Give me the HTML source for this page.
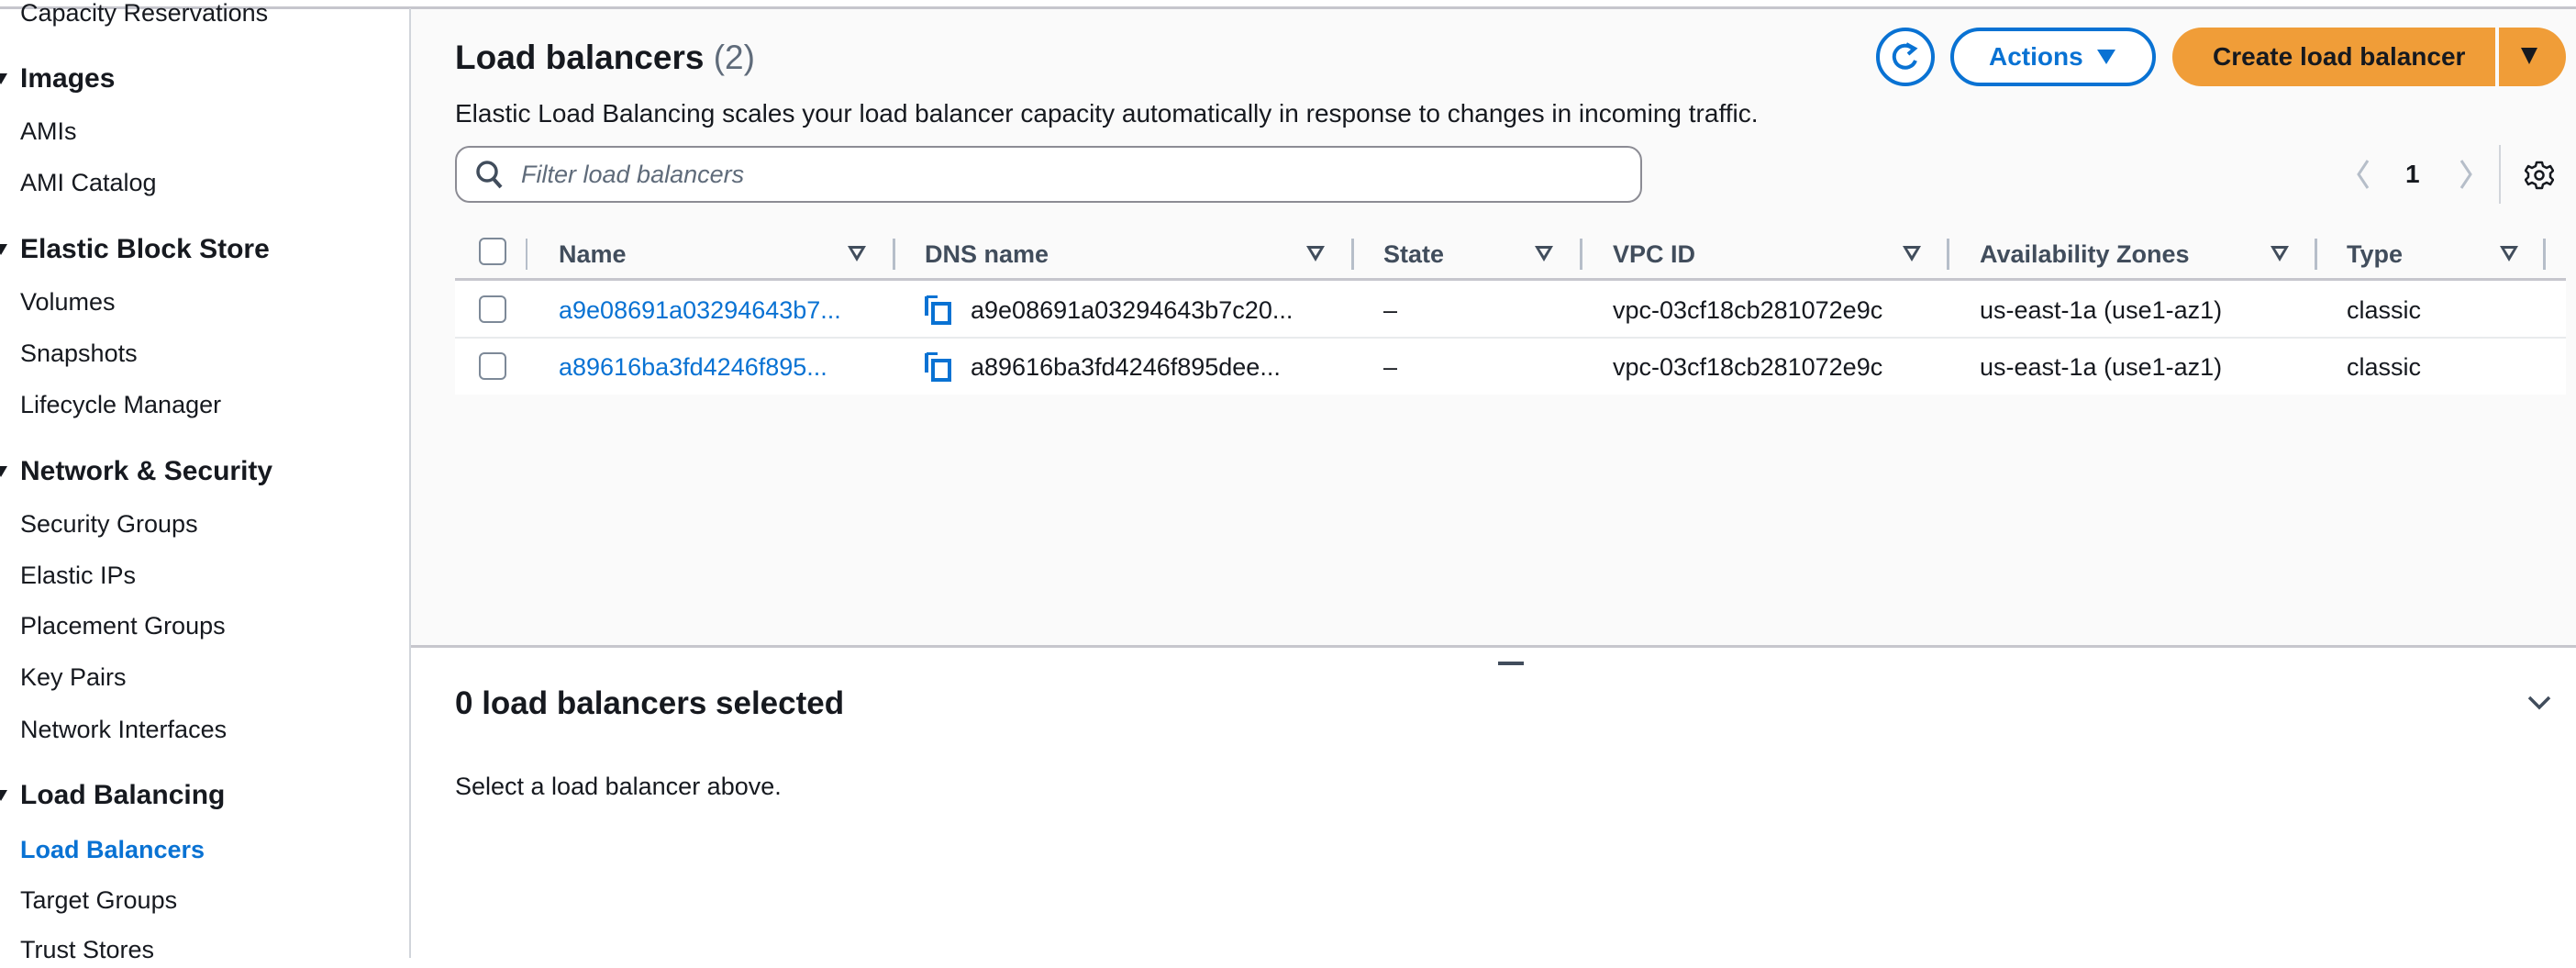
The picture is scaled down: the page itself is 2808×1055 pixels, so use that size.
<!DOCTYPE html>
<html><head><meta charset="utf-8"><style>
*{margin:0;padding:0;box-sizing:border-box}
body{width:2808px;height:1044px;overflow:hidden;background:#fff;font-family:"Liberation Sans",sans-serif;color:#16191f;position:relative}
.a{position:absolute;white-space:nowrap}
.t{font-size:27px;line-height:40px}
.sb{position:absolute;left:22px;font-size:27px;line-height:40px;color:#16191f}
.sh{position:absolute;left:22px;font-size:30px;font-weight:bold;line-height:40px}
.car{position:absolute;left:-6px;width:0;height:0;border-left:7px solid transparent;border-right:7px solid transparent;border-top:12px solid #16191f}
.hd{font-size:27px;font-weight:bold;color:#414d5c;line-height:40px}
.div{position:absolute;width:3px;height:34px;background:#b6bec9;top:260px}
.sort{position:absolute;top:268px;width:0;height:0;border-left:10px solid transparent;border-right:10px solid transparent;border-top:17px solid #414d5c}
.sort:after{content:"";position:absolute;left:-5px;top:-14px;border-left:5px solid transparent;border-right:5px solid transparent;border-top:8px solid #fafafa}
.cb{position:absolute;width:30px;height:30px;border:2px solid #7d8998;border-radius:6px;background:#fff}
.lnk{color:#0972d3}
</style></head><body>
<div class="a" style="left:0;top:0;width:2808px;height:8px;background:#fff"></div>
<div class="a" style="left:0;top:7px;width:2808px;height:3px;background:#c6c6cd"></div>
<div class="a" style="left:446px;top:9px;width:2px;height:1035px;background:#d1d5db"></div>
<div class="sb" style="top:-6px">Capacity Reservations</div>
<div class="car" style="top:80px"></div><div class="sh" style="top:66px">Images</div>
<div class="sb" style="top:123px">AMIs</div>
<div class="sb" style="top:179px">AMI Catalog</div>
<div class="car" style="top:266px"></div><div class="sh" style="top:252px">Elastic Block Store</div>
<div class="sb" style="top:309px">Volumes</div>
<div class="sb" style="top:365px">Snapshots</div>
<div class="sb" style="top:421px">Lifecycle Manager</div>
<div class="car" style="top:508px"></div><div class="sh" style="top:494px">Network &amp; Security</div>
<div class="sb" style="top:551px">Security Groups</div>
<div class="sb" style="top:607px">Elastic IPs</div>
<div class="sb" style="top:662px">Placement Groups</div>
<div class="sb" style="top:718px">Key Pairs</div>
<div class="sb" style="top:775px">Network Interfaces</div>
<div class="car" style="top:861px"></div><div class="sh" style="top:847px">Load Balancing</div>
<div class="sb" style="top:906px;color:#0972d3;font-weight:bold">Load Balancers</div>
<div class="sb" style="top:961px">Target Groups</div>
<div class="sb" style="top:1015px">Trust Stores</div>
<div class="a" style="left:448px;top:10px;width:2360px;height:694px;background:#fafafa"></div>
<div class="a" style="left:448px;top:703px;width:2360px;height:3px;background:#c6c6cd"></div>
<div class="a" style="left:496px;top:39px;font-size:37px;font-weight:bold;line-height:48px">Load balancers <span style="font-weight:normal;color:#5f6b7a">(2)</span></div>
<div class="a t" style="left:496px;top:104px;font-size:28px">Elastic Load Balancing scales your load balancer capacity automatically in response to changes in incoming traffic.</div>
<div class="a" style="left:2045px;top:30px;width:64px;height:64px;border:4px solid #0972d3;border-radius:50%;background:#fff"></div>
<svg class="a" style="left:2057px;top:42px" width="40" height="40" viewBox="0 0 40 40"><path d="M28 11 A12 12 0 1 0 31 24" fill="none" stroke="#0972d3" stroke-width="4"/><path d="M21 6 L30 11 L23 17" fill="none" stroke="#0972d3" stroke-width="4"/></svg>
<div class="a" style="left:2126px;top:30px;width:224px;height:64px;border:4px solid #0972d3;border-radius:32px;background:#fff"></div>
<div class="a" style="left:2168px;top:42px;font-size:28px;font-weight:bold;color:#0972d3;line-height:40px">Actions</div>
<div class="a" style="left:2286px;top:54px;border-left:10px solid transparent;border-right:10px solid transparent;border-top:16px solid #0972d3"></div>
<div class="a" style="left:2368px;top:30px;width:429px;height:64px;border-radius:32px;background:#f09d38"></div>
<div class="a" style="left:2720px;top:30px;width:4px;height:64px;background:#fafafa"></div>
<div class="a" style="left:2412px;top:42px;font-size:28px;font-weight:bold;color:#16191f;line-height:40px">Create load balancer</div>
<div class="a" style="left:2748px;top:52px;border-left:9px solid transparent;border-right:9px solid transparent;border-top:18px solid #16191f"></div>
<div class="a" style="left:496px;top:159px;width:1294px;height:62px;border:2px solid #8c8c94;border-radius:16px;background:#fff"></div>
<svg class="a" style="left:518px;top:174px" width="32" height="34" viewBox="0 0 32 34"><circle cx="13" cy="13" r="10" fill="none" stroke="#414d5c" stroke-width="3.5"/><path d="M20 21 L28 30" stroke="#414d5c" stroke-width="4"/></svg>
<div class="a t" style="left:568px;top:170px;font-style:italic;color:#5f6b7a">Filter load balancers</div>
<svg class="a" style="left:2566px;top:172px" width="20" height="36"><path d="M15 3 L5 18 L15 33" fill="none" stroke="#b6bec9" stroke-width="3"/></svg>
<div class="a" style="left:2622px;top:170px;font-size:28px;font-weight:bold;line-height:40px">1</div>
<svg class="a" style="left:2678px;top:172px" width="20" height="36"><path d="M5 3 L15 18 L5 33" fill="none" stroke="#b6bec9" stroke-width="3"/></svg>
<div class="a" style="left:2724px;top:158px;width:2px;height:64px;background:#d1d5db"></div>
<svg class="a" style="left:2752px;top:174px" width="32" height="34" viewBox="0 0 32 34"><path d="M13 3 h6 l1 4 l4 2 l4-2 l3 5 l-3 3 v4 l3 3 l-3 5 l-4-2 l-4 2 l-1 4 h-6 l-1-4 l-4-2 l-4 2 l-3-5 l3-3 v-4 l-3-3 l3-5 l4 2 l4-2 z" fill="none" stroke="#16191f" stroke-width="2.5" stroke-linejoin="round"/><circle cx="16" cy="17" r="4.5" fill="none" stroke="#16191f" stroke-width="2.5"/></svg>
<div class="a" style="left:496px;top:304px;width:2301px;height:126px;background:#fff"></div>
<div class="a" style="left:496px;top:303px;width:2301px;height:3px;background:#c6c6cd"></div>
<div class="a" style="left:496px;top:367px;width:2301px;height:2px;background:#e9ebed"></div>
<div class="cb" style="left:522px;top:259px"></div>
<div class="div" style="left:573px;width:2px"></div>
<div class="a hd" style="left:609px;top:257px">Name</div><div class="sort" style="left:924px"></div><div class="div" style="left:973px"></div>
<div class="a hd" style="left:1008px;top:257px">DNS name</div><div class="sort" style="left:1424px"></div><div class="div" style="left:1473px"></div>
<div class="a hd" style="left:1508px;top:257px">State</div><div class="sort" style="left:1673px"></div><div class="div" style="left:1722px"></div>
<div class="a hd" style="left:1758px;top:257px">VPC ID</div><div class="sort" style="left:2074px"></div><div class="div" style="left:2122px"></div>
<div class="a hd" style="left:2158px;top:257px">Availability Zones</div><div class="sort" style="left:2475px"></div><div class="div" style="left:2523px"></div>
<div class="a hd" style="left:2558px;top:257px">Type</div><div class="sort" style="left:2725px"></div><div class="div" style="left:2772px"></div>
<div class="cb" style="left:522px;top:322px"></div>
<div class="cb" style="left:522px;top:384px"></div>
<div class="a t lnk" style="left:609px;top:318px">a9e08691a03294643b7...</div>
<div class="a t lnk" style="left:609px;top:380px">a89616ba3fd4246f895...</div>
<svg class="a" style="left:1008px;top:322px" width="30" height="34"><path d="M2 1 H14 M2 1 V22" stroke="#0972d3" stroke-width="4" fill="none"/><rect x="9" y="9" width="18" height="21" fill="none" stroke="#0972d3" stroke-width="4"/></svg>
<svg class="a" style="left:1008px;top:384px" width="30" height="34"><path d="M2 1 H14 M2 1 V22" stroke="#0972d3" stroke-width="4" fill="none"/><rect x="9" y="9" width="18" height="21" fill="none" stroke="#0972d3" stroke-width="4"/></svg>
<div class="a t" style="left:1058px;top:318px">a9e08691a03294643b7c20...</div>
<div class="a t" style="left:1058px;top:380px">a89616ba3fd4246f895dee...</div>
<div class="a t" style="left:1508px;top:318px">–</div>
<div class="a t" style="left:1508px;top:380px">–</div>
<div class="a t" style="left:1758px;top:318px">vpc-03cf18cb281072e9c</div>
<div class="a t" style="left:1758px;top:380px">vpc-03cf18cb281072e9c</div>
<div class="a t" style="left:2158px;top:318px">us-east-1a (use1-az1)</div>
<div class="a t" style="left:2158px;top:380px">us-east-1a (use1-az1)</div>
<div class="a t" style="left:2558px;top:318px">classic</div>
<div class="a t" style="left:2558px;top:380px">classic</div>
<div class="a" style="left:1633px;top:721px;width:28px;height:4px;background:#414d5c"></div>
<div class="a" style="left:496px;top:744px;font-size:35px;font-weight:bold;line-height:46px">0 load balancers selected</div>
<svg class="a" style="left:2754px;top:756px" width="28" height="20"><path d="M3 4 L14 15 L25 4" fill="none" stroke="#414d5c" stroke-width="3.5"/></svg>
<div class="a t" style="left:496px;top:837px">Select a load balancer above.</div>
</body></html>
